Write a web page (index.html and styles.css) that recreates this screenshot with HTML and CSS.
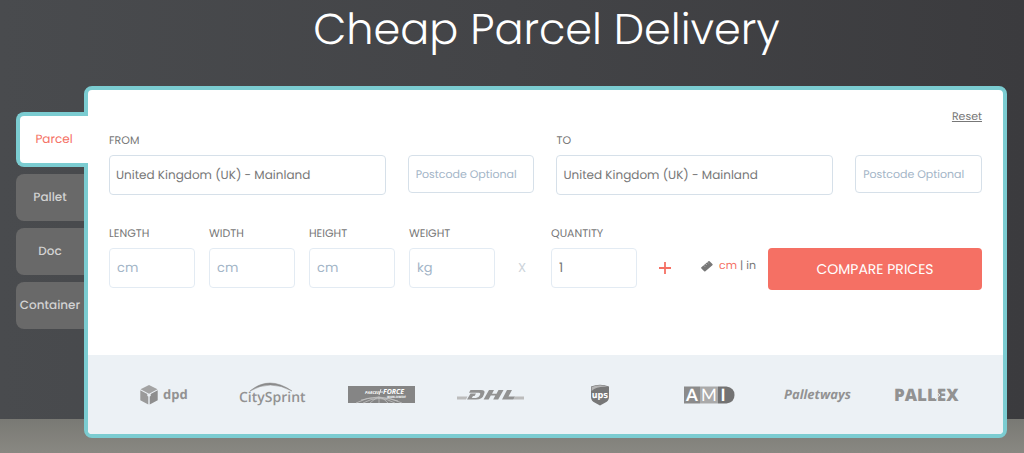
FILE: index.html
```
<!DOCTYPE html>
<html lang="en">
<head>
    <meta charset="UTF-8">
    <meta name="viewport" content="width=device-width, initial-scale=1.0">
    <title>Cheap Parcel Delivery</title>
    <link rel="stylesheet" href="styles.css">
</head>
<body>
    <h1>Cheap Parcel Delivery</h1>

    <main class="quote">
        <!-- Shipment type -->
        <nav class="tabs">
            <button type="button" class="tab active">Parcel</button>
            <button type="button" class="tab">Pallet</button>
            <button type="button" class="tab">Doc</button>
            <button type="button" class="tab">Container</button>
        </nav>

        <div class="panel">
            <form class="quote-form">
                <div class="reset-row"><a class="reset" href="#">Reset</a></div>

                <!-- Addresses -->
                <div class="address-row">
                    <div class="field">
                        <label for="from">FROM</label>
                        <select id="from">
                            <option>United Kingdom (UK) - Mainland</option>
                        </select>
                    </div>
                    <input class="postcode" type="text" placeholder="Postcode Optional" aria-label="From postcode">
                    <div class="field">
                        <label for="to">TO</label>
                        <select id="to">
                            <option>United Kingdom (UK) - Mainland</option>
                        </select>
                    </div>
                    <input class="postcode" type="text" placeholder="Postcode Optional" aria-label="To postcode">
                </div>

                <!-- Dimensions -->
                <div class="size-row">
                    <div class="field">
                        <label for="length">LENGTH</label>
                        <input id="length" type="text" placeholder="cm">
                    </div>
                    <div class="field">
                        <label for="width">WIDTH</label>
                        <input id="width" type="text" placeholder="cm">
                    </div>
                    <div class="field">
                        <label for="height">HEIGHT</label>
                        <input id="height" type="text" placeholder="cm">
                    </div>
                    <div class="field">
                        <label for="weight">WEIGHT</label>
                        <input id="weight" type="text" placeholder="kg">
                    </div>
                    <span class="times">X</span>
                    <div class="field">
                        <label for="quantity">QUANTITY</label>
                        <input id="quantity" type="text" value="1">
                    </div>
                    <button type="button" class="add" aria-label="Add parcel">
                        <svg width="12" height="12" viewBox="0 0 12 12"><path d="M6 0v12M0 6h12" stroke="currentColor" stroke-width="1.8"/></svg>
                    </button>
                    <div class="units">
                        <svg width="12" height="12" viewBox="0 0 12 12">
                            <path d="M.4 7.200 7.400 1.200Q8 .7 8.600 1.200L11.400 4q.6.600 0 1.200L4.400 11.200q-.6.500-1.200 0L.4 8.400q-.6-.6 0-1.200z" fill="#777"/>
                            <path d="M2.800 5.400l1.200 1.200M4.600 3.800l1.200 1.200M6.400 2.200l1.200 1.200" stroke="#fff" stroke-width=".5"/>
                        </svg>
                        <a class="unit selected" href="#">cm</a> | <a class="unit" href="#">in</a>
                    </div>
                    <button type="submit" class="compare">COMPARE PRICES</button>
                </div>
            </form>

            <!-- Couriers -->
            <div class="couriers">
                <svg width="48" height="22" viewBox="0 0 48 22" role="img" aria-label="dpd">
                    <path d="M9 1l8.500 4.200L9 9.800.5 5.200z" fill="#a3a3a3"/>
                    <path d="M.3 6.200l7 3.900v1.800l1 .6V20.600l-8-4.400z" fill="#9a9a9a"/>
                    <path d="M17.700 6.200l-7 3.900v1.800l-1 .6v8.100l8-4.400z" fill="#8e8e8e"/>
                    <text x="23" y="15" class="dpd">dpd</text>
                </svg>
                <svg width="68" height="26" viewBox="0 0 68 26" role="img" aria-label="CitySprint">
                    <path d="M11 9Q30-7 53 9Q31-3 11 9z" fill="#8b8b8b" stroke="#8b8b8b" stroke-width=".5"/>
                    <text x="0" y="20" class="citysprint">CitySprint</text>
                </svg>
                <svg width="67" height="17" viewBox="0 0 67 17" role="img" aria-label="Parcelforce Worldwide">
                    <rect width="67" height="17" fill="#858585"/>
                    <g fill="none" stroke="#c8c8c8" stroke-width=".7">
                        <path d="M8 17Q30 5 54 17M15 17Q31 8 47 17M22 17Q29 11 31 11Q36 12 40 17M31 11v6M13 14Q31 9 50 15"/>
                    </g>
                    <text x="17" y="8" class="parcel">PARCEL</text>
                    <path d="M33 3l-2 6M30 6h5" stroke="#fff" stroke-width=".8"/>
                    <text x="35" y="8" class="force">FORCE</text>
                    <text x="39" y="12" class="worldwide">WORLDWIDE</text>
                </svg>
                <svg width="67" height="12" viewBox="0 0 67 12" role="img" aria-label="DHL">
                    <path d="M0 7.500h10.500L9 10.500H0zM58 7.500h9v3H56.500z" fill="#bcbcbc"/>
                    <g fill="#929292">
                        <path d="M13.500 1H24q5 0 3 4.200Q25.500 10.500 19 10.500H10l3.500-6H19L17.500 7H16l-1.200 2H19q2.500 0 4-3 .8-2.300-1-2.300H12z"/>
                        <path d="M32 1h5l-2 3.700h4.500L41.500 1h5l-5.300 9.500h-5l2.100-4h-4.500l-2.200 4h-5z"/>
                        <path d="M50 1h5l-3.500 6.500H58l-1.700 3H45z"/>
                    </g>
                </svg>
                <svg width="20" height="22" viewBox="0 0 20 22" role="img" aria-label="UPS">
                    <path d="M1 2.500Q10-1 19 2.500V13q0 4-4 5.800L10 21.500l-5-2.700Q1 17 1 13z" fill="#777"/>
                    <path d="M1.600 3Q10-.5 18 3 7 2 1.600 7z" fill="#b5b5b5"/>
                    <text x="10" y="14" text-anchor="middle" class="ups">ups</text>
                </svg>
                <svg width="51" height="18" viewBox="0 0 51 18" role="img" aria-label="AMI">
                    <path d="M0 .5h16v17H0z" fill="#8b8b8b"/>
                    <path d="M16 .5h18v17H16z" fill="#aaa"/>
                    <path d="M34 .5h8.500q8 1 8 8.500t-8 8.500H34z" fill="#737373"/>
                    <text x="8" y="15" text-anchor="middle" class="ami">A</text>
                    <text x="25" y="15" text-anchor="middle" class="ami thin">M</text>
                    <text x="39" y="15" text-anchor="middle" class="ami">I</text>
                </svg>
                <svg width="68" height="18" viewBox="0 0 68 18" role="img" aria-label="Palletways">
                    <text x="0" y="13" class="palletways">Palletways</text>
                </svg>
                <svg width="66" height="18" viewBox="0 0 66 18" role="img" aria-label="PALLEX">
                    <text x="0" y="15" class="pallex">PALLEX</text>
                    <path d="M41 5l5 4-5 4" fill="none" stroke="#ecf1f5" stroke-width="1"/>
                </svg>
            </div>
        </div>
    </main>
</body>
</html>
```
FILE: styles.css
```
* {
    box-sizing: border-box;
}

body {
    margin: 0;
    min-height: 100vh;
    padding: 0 17px 15px 16px;
    font-family: Poppins, Inter, sans-serif;
    font-size: 13px;
    text-rendering: geometricPrecision;
    color: #777;
    background:
        linear-gradient(#797974, #898882) bottom / 100% 34px no-repeat,
        linear-gradient(90deg, #494b4e, #434447 50%, #3b3b3e);
}

h1 {
    margin: 0;
    padding: 0 0 26px 70px;
    color: #fff;
    font-size: 43px;
    font-weight: 300;
    line-height: 60px;
    text-align: center;
}

button,
input,
select {
    font: inherit;
    color: inherit;
    text-rendering: inherit;
}

button {
    padding: 0;
    border: none;
    cursor: pointer;
}

a {
    color: inherit;
}

.quote {
    display: flex;
}

/* Tabs */
.tabs {
    display: flex;
    flex-direction: column;
    gap: 7px;
    width: 68px;
    padding-top: 26px;
}

.tab {
    height: 47px;
    border-radius: 8px 0 0 8px;
    background: #696969;
    color: #d2d2d2;
    font-size: 12px;
    font-weight: 500;
}

.tab.active {
    z-index: 1;
    height: 55px;
    margin-right: -4px;
    border: 4px solid #7bccd1;
    border-right: none;
    background: #fff;
    color: #f57064;
    font-weight: 400;
}

/* Panel */
.panel {
    flex: 1;
    border: 4px solid #7bccd1;
    border-radius: 8px;
    background: #fff;
    overflow: hidden;
}

.quote-form {
    padding: 16px 21px 67px;
}

.reset-row {
    font-size: 11px;
    line-height: 20px;
    text-align: right;
}

.address-row {
    display: grid;
    grid-template-columns: 277fr 127fr 277fr 127fr;
    column-gap: 22px;
    padding-top: 4px;
}

.field {
    display: flex;
    flex-direction: column;
}

label {
    padding-bottom: 5px;
    font-size: 11px;
    line-height: 20px;
}

input,
select {
    width: 100%;
    height: 40px;
    padding: 0 7px;
    border: 1px solid #e3ebf3;
    border-radius: 4px;
    background: #fff;
    appearance: none;
}

select {
    padding: 0 6px;
    border-color: #d6e0e9;
    font-size: 12px;
}

input::placeholder {
    color: #a3b5c7;
}

.postcode {
    height: 38px;
    margin-top: 25px;
    border-color: #d6e0e9;
    font-size: 11px;
}

.size-row {
    display: flex;
    align-items: flex-end;
    padding-top: 28px;
}

.size-row .field {
    width: 86px;
    margin-right: 14px;
}

.times {
    width: 42px;
    padding-right: 16px;
    color: #ccd3da;
    line-height: 40px;
    text-align: center;
}

.add {
    display: flex;
    align-items: center;
    height: 40px;
    margin-left: 8px;
    background: none;
    color: #f57064;
}

.units {
    display: flex;
    align-items: center;
    gap: 3px;
    height: 40px;
    margin-left: 30px;
    padding-bottom: 5px;
    font-size: 11px;
}

.unit {
    text-decoration: none;
}

.unit.selected {
    margin-left: 3px;
    color: #f57064;
}

.compare {
    flex: 1;
    height: 42px;
    margin: 0 0 -2px 12px;
    border-radius: 4px;
    background: #f57064;
    color: #fff;
    font-size: 14px;
}

/* Couriers */
.couriers {
    display: grid;
    grid-template-columns: repeat(8, 1fr);
    place-items: center;
    height: 79px;
    padding: 0 21px;
    background: #ecf1f5;
}

.couriers svg {
    overflow: visible;
}

.couriers text {
    fill: #929292;
    font-family: "Open Sans", sans-serif;
}

.couriers .dpd {
    font-size: 13px;
    font-weight: 700;
}

.couriers .citysprint {
    font-size: 14px;
    font-weight: 600;
}

.couriers .parcel,
.couriers .force,
.couriers .worldwide,
.couriers .ups,
.couriers .ami {
    fill: #fff;
    font-weight: 700;
}

.couriers .parcel {
    font-size: 4px;
    font-style: italic;
}

.couriers .force {
    font-size: 7px;
    font-style: italic;
}

.couriers .worldwide {
    font-size: 3px;
}

.couriers .ups {
    font-family: "DejaVu Sans Condensed", sans-serif;
    font-size: 9px;
}

.couriers .ami {
    font-family: Lato, sans-serif;
    font-size: 17px;
}

.couriers .thin {
    font-weight: 400;
}

.couriers .palletways {
    font-size: 13px;
    font-style: italic;
    font-weight: 700;
}

.couriers .pallex {
    font-size: 17px;
    font-weight: 800;
}
```
